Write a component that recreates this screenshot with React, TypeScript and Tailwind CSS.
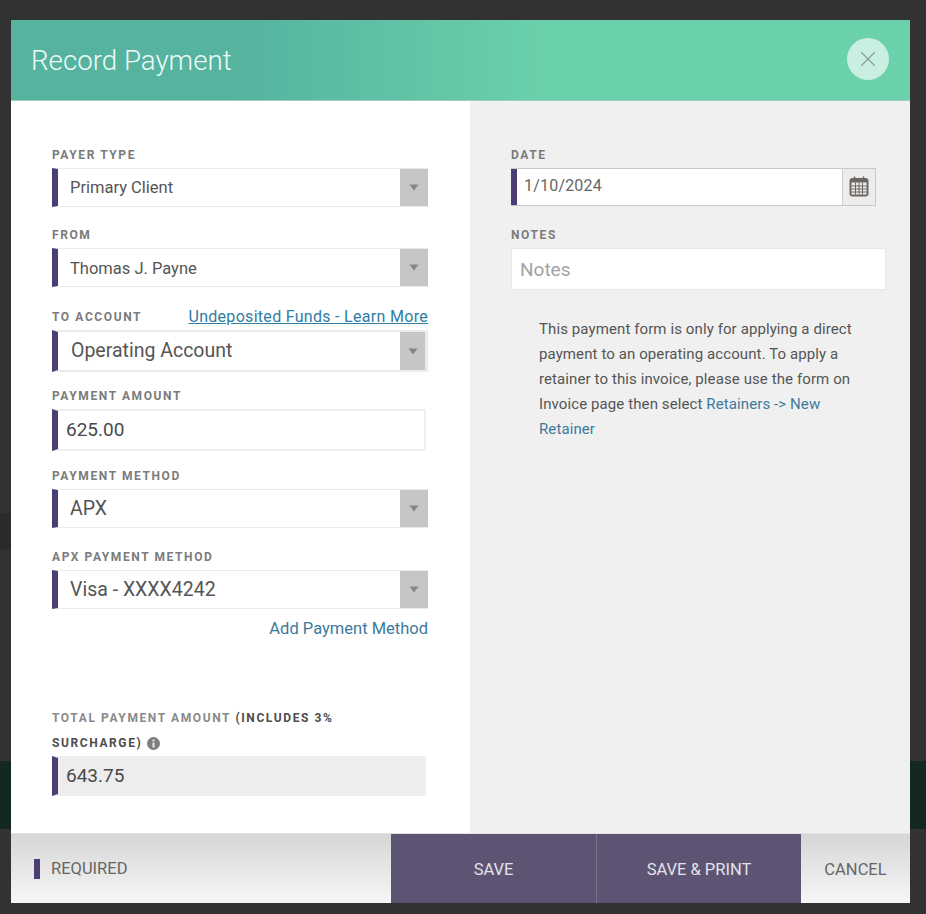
import { X } from "lucide-react";

function Caret() {
  return (
    <svg width="10" height="7" viewBox="0 0 10 7" className="text-[#858585]">
      <path d="M0.5 0.5h9L5 6.5z" fill="currentColor" />
    </svg>
  );
}

function CalendarIcon() {
  return (
    <svg width="20" height="21" viewBox="0 0 20 21" fill="none" className="-mt-[2px]">
      <path d="M5.5 0.5v3M14.5 0.5v3" stroke="#666" strokeWidth="1.5" />
      <rect x="0.5" y="2" width="19" height="18.5" rx="3" fill="#6b6663" />
      <rect x="2.5" y="6.5" width="15" height="12" fill="#f0ede8" />
      <path
        d="M2.5 10h15M2.5 13h15M2.5 16h15M6.5 6.5v12M10 6.5v12M13.5 6.5v12"
        stroke="#6b6663"
        strokeWidth="1"
      />
    </svg>
  );
}

function InfoIcon() {
  return (
    <svg width="13" height="13" viewBox="0 0 13 13" className="ml-[5px]">
      <circle cx="6.5" cy="6.5" r="6.5" fill="#7d7d7d" />
      <path d="M5.5 5.5h2v5h-2zM5.5 2.5h2v2h-2z" fill="#e8e8e8" />
    </svg>
  );
}

function Label({ children }: { children: React.ReactNode }) {
  return (
    <div className="flex h-5 items-center text-[12px] font-bold uppercase tracking-[1.6px] text-[#7b7b7b]">
      {children}
    </div>
  );
}

function SelectBox({
  value,
  className,
  textClass,
  arrowClass,
}: {
  value: string;
  className: string;
  textClass: string;
  arrowClass: string;
}) {
  return (
    <div
      className={`mt-[3px] flex w-[376px] items-stretch border-[#ebebeb] border-l-[6px] border-l-[#4c3e74] bg-white ${className}`}
    >
      <div className={`flex flex-1 items-center text-[#555] ${textClass}`}>{value}</div>
      <div className={`flex items-center justify-center bg-[#c6c6c6] ${arrowClass}`}>
        <Caret />
      </div>
    </div>
  );
}

function TextBox({ value, bg, h }: { value: string; bg: string; h: string }) {
  return (
    <div
      className={`mt-[3px] flex w-[374px] items-center border-y-2 border-r-2 border-[#efefef] border-l-[6px] border-l-[#4c3e74] pl-2 text-[19px] text-[#4a4a4a] ${bg} ${h}`}
    >
      {value}
    </div>
  );
}

export default function App() {
  return (
    <div className="relative h-[914px] w-[926px] overflow-hidden bg-[#323232] pl-[11px] pt-5 font-['Roboto',sans-serif]">
      {/* page peeking out behind the dialog */}
      <div className="absolute left-0 top-[513px] h-[37px] w-[11px] bg-[#2b2b2b]" />
      <div className="absolute left-0 top-[761px] h-[68px] w-full bg-[#132821]" />

      <div className="relative flex h-[883px] w-[899px] flex-col">
        <header className="flex h-[81px] items-center justify-between border-b border-[#9ed0bf] bg-[linear-gradient(90deg,#55b3a0_0%,#55b3a0_25%,#6bd1ab_60%,#6bd1ab_100%)] pl-5 pr-[21px]">
          <h1 className="pt-[1px] text-[27.7px] font-light text-[#eefaf6]">Record Payment</h1>
          <button className="-mt-[2px] flex h-[42px] w-[42px] items-center justify-center rounded-full bg-[#c9efe2] text-[#84989a]">
            <X size={26} strokeWidth={1} />
          </button>
        </header>

        <div className="flex h-[732px]">
          <section className="w-[459px] bg-white pl-[41px] pt-[44px]">
            <Label>Payer Type</Label>
            <SelectBox
              value="Primary Client"
              className="h-[39px] border-y"
              arrowClass="w-[28px]"
              textClass="pl-3 pt-[2px] text-[16.5px]"
            />

            <div className="mt-[18px]">
              <Label>From</Label>
              <SelectBox
                value="Thomas J. Payne"
                className="h-[39px] border-y"
                arrowClass="w-[28px]"
                textClass="pl-3 pt-[3px] text-[16.5px]"
              />
            </div>

            <div className="mt-5">
              <div className="flex w-[376px] items-center justify-between">
                <Label>To Account</Label>
                <a className="text-[16px] leading-[18px] tracking-[0.3px] text-[#2f7da3] underline">
                  Undeposited Funds - Learn More
                </a>
              </div>
              <SelectBox
                value="Operating Account"
                className="h-[42px] border-y-2 border-r-[3px]"
                arrowClass="w-[25px]"
                textClass="pl-[13px] text-[19.5px]"
              />
            </div>

            <div className="mt-[14px]">
              <Label>Payment Amount</Label>
              <TextBox value="625.00" bg="bg-white" h="h-[42px]" />
            </div>

            <div className="mt-[15px]">
              <Label>Payment Method</Label>
              <SelectBox
                value="APX"
                className="h-[39px] border-y"
                arrowClass="w-[28px]"
                textClass="pl-3 text-[19.5px]"
              />
            </div>

            <div className="mt-[19px]">
              <Label>APX Payment Method</Label>
              <SelectBox
                value="Visa - XXXX4242"
                className="h-[39px] border-y"
                arrowClass="w-[28px]"
                textClass="pl-3 text-[19.5px]"
              />
              <div className="mt-[8px] w-[376px] text-right text-[16.5px] text-[#3c7a9c]">
                Add Payment Method
              </div>
            </div>

            <div className="mt-[64px] w-[376px] text-[12px] font-bold uppercase leading-[25px] tracking-[1.6px] text-[#8a8a8a]">
              Total Payment Amount <span className="text-[#4d4d4d]">(Includes 3%</span>
              <div className="flex items-center text-[#4d4d4d]">
                Surcharge)
                <InfoIcon />
              </div>
            </div>
            <div className="-mt-[3px]">
              <TextBox value="643.75" bg="bg-[#ededed]" h="h-10" />
            </div>
          </section>

          <section className="flex-1 bg-[#f0f0f0] pl-[41px] pt-[44px]">
            <Label>Date</Label>
            <div className="mt-[3px] flex h-[38px] w-[365px] items-stretch border border-[#c8c8c8] border-l-0">
              <div className="flex flex-1 items-center border-l-[6px] border-l-[#4c3e74] bg-white pb-[2px] pl-[7px] text-[16px] tracking-[0.2px] text-[#666]">
                1/10/2024
              </div>
              <div className="flex w-[33px] items-center justify-center border-l border-[#cfcfcf] bg-[#ececec]">
                <CalendarIcon />
              </div>
            </div>

            <div className="mt-[19px]">
              <Label>Notes</Label>
              <div className="mt-[3px] flex h-[42px] w-[375px] items-center border border-[#e8e8e8] bg-white pl-2 pt-[2px] text-[19px] text-[#a3a3a3]">
                Notes
              </div>
            </div>

            <p className="ml-[28px] mt-[27px] w-[320px] text-[15px] leading-[25px] tracking-[0.1px] text-[#555]">
              This payment form is only for applying a direct payment to an operating account. To
              apply a retainer to this invoice, please use the form on Invoice page then select{" "}
              <span className="text-[#3c7a9c]">Retainers -&gt; New</span>
              <br />
              <span className="text-[#3c7a9c]">Retainer</span>
            </p>
          </section>
        </div>

        <footer className="flex h-[70px] border-t border-[#e2e2e2]">
          <div className="flex w-[380px] items-center bg-[linear-gradient(180deg,#d6d6d6,#f6f6f6)] pl-[23px]">
            <span className="h-5 w-[6px] bg-[#4c3e74]" />
            <span className="ml-[11px] pt-[2px] text-[16.5px] text-[#666]">REQUIRED</span>
          </div>
          <button className="w-[206px] border-r border-[#77708a] bg-[#5c5472] pt-[3px] text-[16.5px] text-[#e4e2ea]">
            SAVE
          </button>
          <button className="w-[204px] bg-[#5c5472] pt-[3px] text-[16.5px] text-[#e4e2ea]">
            SAVE &amp; PRINT
          </button>
          <button className="flex-1 bg-[linear-gradient(180deg,#d6d6d6,#f6f6f6)] pt-[3px] text-[16.5px] text-[#666]">
            CANCEL
          </button>
        </footer>
      </div>
    </div>
  );
}
